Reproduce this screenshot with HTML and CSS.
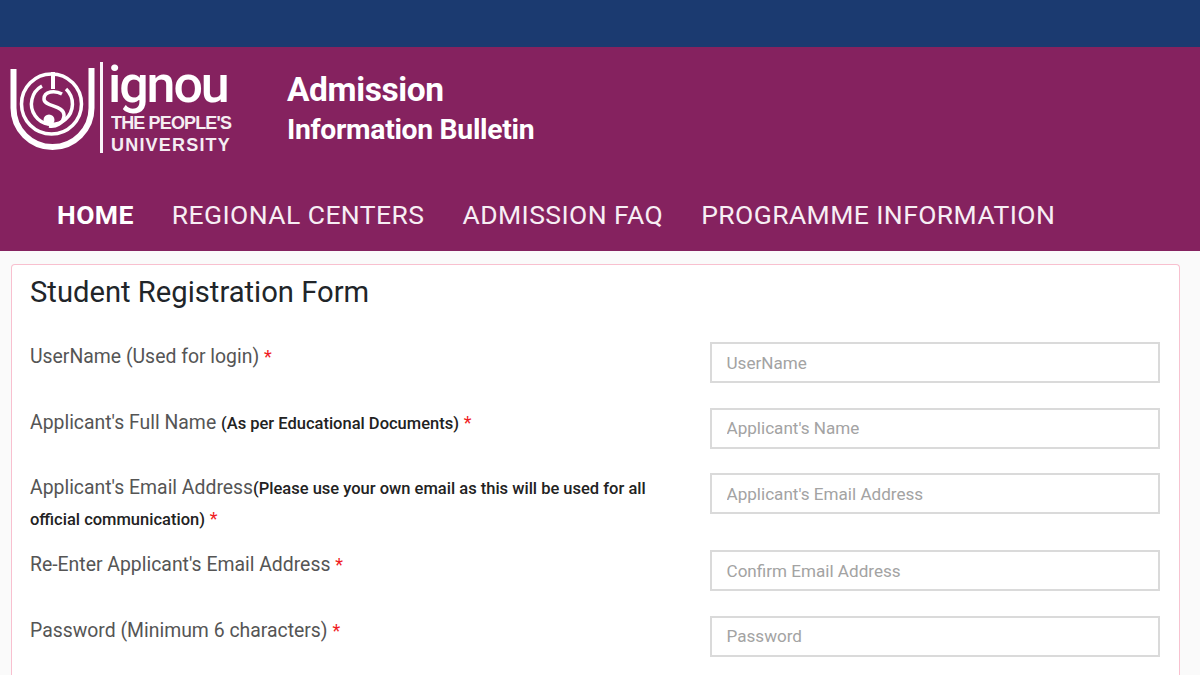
FILE: index.html
```html
<!DOCTYPE html>
<html lang="en">
<head>
<meta charset="utf-8">
<title>Student Registration Form</title>
<link rel="stylesheet" href="styles.css">
</head>
<body>
<div class="topbar"></div>
<header class="masthead">
  <div class="brand">
    <div class="logo">
      <svg class="emblem" width="92" height="92" viewBox="0 0 92 92" fill="none" stroke="#fff">
        <path d="M5.5 7 V46 A39 39 0 0 0 83.5 46 V6" stroke-width="6"/>
        <circle cx="43.5" cy="42" r="30" stroke-width="3.5"/>
        <path d="M34 24 A20.5 20.5 0 1 0 58 27" stroke-width="3.5"/>
        <path d="M45 10 V27" stroke-width="4"/>
        <path d="M54 32 C47 28 36 29 36 37 C36 45 56 43 56 53 C56 62 47 65 41 64" stroke-width="3.5"/>
        <circle cx="41" cy="58" r="5.5" fill="#fff" stroke="none"/>
      </svg>
      <span class="logo-rule"></span>
      <div class="wordmark">
        <span class="word-main">ignou</span>
        <span class="word-sub word-people">THE PEOPLE'S</span>
        <span class="word-sub word-univ">UNIVERSITY</span>
      </div>
    </div>
    <div class="title">
      <span class="title-main">Admission</span>
      <span class="title-sub">Information Bulletin</span>
    </div>
  </div>
  <nav class="nav">
    <a class="nav-link active">HOME</a>
    <a class="nav-link">REGIONAL CENTERS</a>
    <a class="nav-link">ADMISSION FAQ</a>
    <a class="nav-link">PROGRAMME INFORMATION</a>
  </nav>
</header>
<main class="card">
  <h1 class="card-title">Student Registration Form</h1>
  <div class="row">
    <label class="label">UserName (Used for login) <span class="req">*</span></label>
    <input class="field" type="text" placeholder="UserName">
  </div>
  <div class="row">
    <label class="label">Applicant's Full Name <b class="note">(As per Educational Documents)</b> <span class="req">*</span></label>
    <input class="field" type="text" placeholder="Applicant's Name">
  </div>
  <div class="row row-tall">
    <label class="label">Applicant's Email Address<b class="note">(Please use your own email as this will be used for all</b> <b class="note">official communication)</b> <span class="req">*</span></label>
    <input class="field" type="text" placeholder="Applicant's Email Address">
  </div>
  <div class="row">
    <label class="label">Re-Enter Applicant's Email Address <span class="req">*</span></label>
    <input class="field" type="text" placeholder="Confirm Email Address">
  </div>
  <div class="row row-last">
    <label class="label">Password (Minimum 6 characters) <span class="req">*</span></label>
    <input class="field" type="password" placeholder="Password">
  </div>
</main>
</body>
</html>
```
FILE: styles.css
```css
* { box-sizing: border-box; }
html, body { margin: 0; height: 675px; overflow: hidden; }
body { background: #fafafa; font-family: Roboto, "Liberation Sans", sans-serif; display: flex; flex-direction: column; }

.topbar { height: 47px; background: #1b3a70; flex: none; }

.masthead { height: 204px; flex: none; background: #85225f; color: #fff; display: flex; flex-direction: column; }
.brand { display: flex; align-items: flex-start; height: 153px; padding: 15px 0 0 8px; }
.logo { display: flex; align-items: flex-start; width: 279px; }
.emblem { display: block; flex: none; }
.logo-rule { width: 3px; height: 91px; background: #fff; margin-right: 5px; flex: none; opacity: .95; }
.wordmark { display: flex; flex-direction: column; }
.word-main { font-size: 52px; line-height: 46px; font-weight: 500; letter-spacing: -2.1px; margin-bottom: 4px; }
.word-sub { font-size: 18px; line-height: 22px; font-weight: 700; font-family: "Liberation Sans", sans-serif; opacity: .92; margin-left: 3px; }
.word-people { letter-spacing: -.85px; }
.word-univ { letter-spacing: 1.2px; }
.title { display: flex; flex-direction: column; padding-top: 9px; font-weight: 700; }
.title-main { font-size: 33.5px; line-height: 38px; letter-spacing: -.4px; }
.title-sub { font-size: 28.3px; line-height: 41px; letter-spacing: -.3px; }

.nav { display: flex; gap: 38px; padding-left: 57px; }
.nav-link { font-size: 26.5px; line-height: 30px; font-weight: 400; color: #f7eef4; letter-spacing: .42px; }
.nav-link.active { font-weight: 700; color: #fff; }

.card { margin: 13px 20px 0 11px; flex: 1; background: #fff; border: 1px solid #f8c0cf; border-bottom: 0; border-radius: 4px 4px 0 0; padding: 10px 19px 0 18px; }
.card-title { margin: 0 0 33px; font-size: 29.2px; line-height: 34px; font-weight: 400; color: #212529; }

.row { display: grid; grid-template-columns: 680px 1fr; height: 65.5px; }
.row-tall { height: 77px; }
.row-last { height: 41px; }
.label { font-size: 19.4px; line-height: 30px; color: #555; padding-right: 20px; }
.note { font-size: 16.5px; font-weight: 500; color: #222; }
.req { color: #f01c24; font-size: 18px; }
.field { height: 41px; width: 100%; border: 2px solid #dadada; border-radius: 0; background: #fff; padding: 0 14.5px; font: 400 17.1px Roboto, sans-serif; outline: none; }
.field::placeholder { color: #a3a3a3; opacity: 1; }
```
